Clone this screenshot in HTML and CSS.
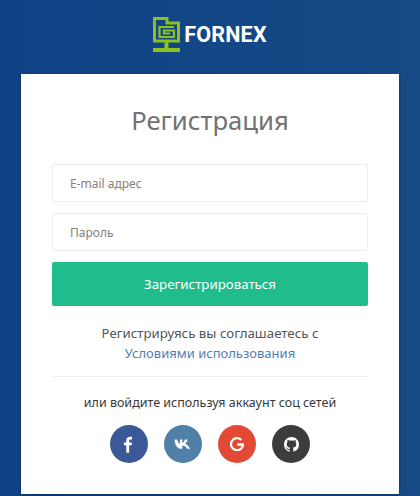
FILE: index.html
```html
<!DOCTYPE html>
<html lang="ru">
<head>
    <meta charset="UTF-8">
    <meta name="viewport" content="width=device-width, initial-scale=1.0">
    <title>Регистрация</title>
    <link rel="stylesheet" href="styles.css">
</head>
<body>
    <div class="logo">
        <svg class="logo-icon" width="27" height="35" viewBox="0 0 27 35">
            <path d="M1.500 1.500H14V6H25.500V24H1.500Z" fill="none" stroke="#8cc21f" stroke-width="3"/>
            <path d="M21 10H6.500V20H21V13.500H11V16.500H17" fill="none" stroke="#8cc21f" stroke-width="2.200"/>
            <path d="M11.500 25H15.500V32H11.500Z" fill="#8cc21f"/>
            <path d="M0 31H27V35H0Z" fill="#8cc21f"/>
        </svg>
        <span class="logo-text">FORNEX</span>
    </div>

    <div class="card">
        <h1>Регистрация</h1>
        <form>
            <input class="field" type="text" placeholder="E-mail адрес">
            <input class="field" type="password" placeholder="Пароль">
            <button class="submit" type="button">Зарегистрироваться</button>
        </form>
        <p class="terms">Регистрируясь вы соглашаетесь с<br><a href="#">Условиями использования</a></p>
        <div class="divider"></div>
        <p class="alt">или войдите используя аккаунт соц сетей</p>
        <div class="socials">
            <a class="social fb" href="#">
                <svg width="11" height="17" viewBox="0 0 12 18"><path d="M3.600 18V9.900H1V6.800H3.600V4.600C3.600 1.900 5.200.6 7.500.6 8.600.6 9.600.7 9.900.7V3.500H8.200C6.900 3.500 6.700 4.100 6.700 5V6.800H9.800L9.400 9.900H6.700V18Z" fill="#fff"/></svg>
            </a>
            <a class="social vk" href="#">
                <svg width="17" height="10" viewBox="0 0 18 11"><path d="M.2.6H3.100C3.800 3 5 5.300 6.100 5.800V.6H8.800V4.400C9.900 4.200 11 2.700 11.900.6H14.700C14.200 2.600 13 4.200 11.900 5C13.200 5.700 14.600 7 17.600 10.800H14.300C13.200 8.900 11.300 7.300 8.800 7.100V10.800H8C3.500 10.800.8 7.500.2.600Z" fill="#fff"/></svg>
            </a>
            <a class="social gp" href="#">
                <svg width="14" height="14" viewBox="0 0 14 14"><path d="M11.300 3A6 6 0 1 0 13 7.500H7.200" fill="none" stroke="#fff" stroke-width="2.300"/></svg>
            </a>
            <a class="social gh" href="#">
                <svg width="15" height="15" viewBox="0 0 16 16"><path d="M8 0C3.580 0 0 3.580 0 8c0 3.540 2.290 6.530 5.470 7.590.4.070.55-.17.55-.38 0-.19-.01-.82-.01-1.490-2.010.37-2.530-.49-2.690-.94-.09-.23-.48-.94-.82-1.130-.28-.15-.68-.52-.01-.53.630-.01 1.080.58 1.230.82.720 1.210 1.870.870 2.330.660.070-.520.280-.870.510-1.070-1.780-.2-3.640-.89-3.640-3.950 0-.870.310-1.590.820-2.150-.08-.2-.36-1.020.08-2.120 0 0 .670-.210 2.200.820.640-.180 1.320-.270 2-.270s1.360.090 2 .270c1.530-1.040 2.200-.820 2.200-.820.440 1.100.160 1.920.080 2.120.510.560.820 1.270.820 2.150 0 3.070-1.870 3.750-3.650 3.950.290.250.540.730.540 1.480 0 1.070-.010 1.930-.010 2.200 0 .210.150.460.550.380A8.010 8.010 0 0 0 16 8c0-4.420-3.580-8-8-8Z" fill="#fff"/></svg>
            </a>
        </div>
    </div>
</body>
</html>
```

FILE: styles.css
```css
* {
    box-sizing: border-box;
}
body {
    margin: 0;
    height: 496px;
    overflow: hidden;
    font-family: "Noto Sans", Arial, sans-serif;
    background: linear-gradient(90deg, #0f4285, #164b85);
}
.logo {
    height: 74px;
    display: flex;
    align-items: center;
    justify-content: center;
    gap: 4px;
    padding-bottom: 5px;
}
.logo-text {
    font-family: "Roboto", sans-serif;
    font-weight: 700;
    font-size: 21.5px;
    letter-spacing: 0.2px;
    color: #fff;
}
.card {
    width: 378px;
    height: 420px;
    margin: 0 0 0 21px;
    padding: 0 31px;
    background: #fff;
    box-shadow: 0 1px 3px rgba(0,0,0,0.3);
}
h1 {
    margin: 0;
    padding-top: 27px;
    height: 90px;
    font-size: 25.7px;
    line-height: 40px;
    font-weight: 400;
    color: #727272;
    text-align: center;
}
.field {
    display: block;
    width: 100%;
    height: 38px;
    margin-bottom: 11px;
    padding: 0 17px;
    border: 1px solid #eceef2;
    border-radius: 2px;
    font-family: inherit;
    font-size: 12px;
    background: #fff;
}
.field::placeholder {
    color: #84807c;
    opacity: 1;
}
.submit {
    display: block;
    width: 100%;
    height: 44px;
    border: 0;
    border-radius: 2px;
    background: #20bc8c;
    color: #fff;
    font-family: inherit;
    font-size: 13.3px;
}
.terms {
    margin: 17px 0 0;
    font-size: 13.3px;
    line-height: 20px;
    color: #555;
    text-align: center;
}
.terms a {
    color: #4f7fb5;
    font-size: 13px;
    text-decoration: none;
}
.divider {
    height: 1px;
    margin-top: 13px;
    background: #eff0f3;
}
.alt {
    margin: 17px 0 0;
    font-size: 12.5px;
    line-height: 18px;
    color: #3a3a3a;
    text-align: center;
}
.socials {
    display: flex;
    justify-content: center;
    gap: 16.3px;
    margin-top: 13px;
}
.social {
    display: flex;
    align-items: center;
    justify-content: center;
    width: 38px;
    height: 38px;
    border-radius: 50%;
}
.fb { background: #3b5998; }
.vk { background: #507fa8; }
.gp { background: #e24a36; }
.gh { background: #3c3c3c; }
```
